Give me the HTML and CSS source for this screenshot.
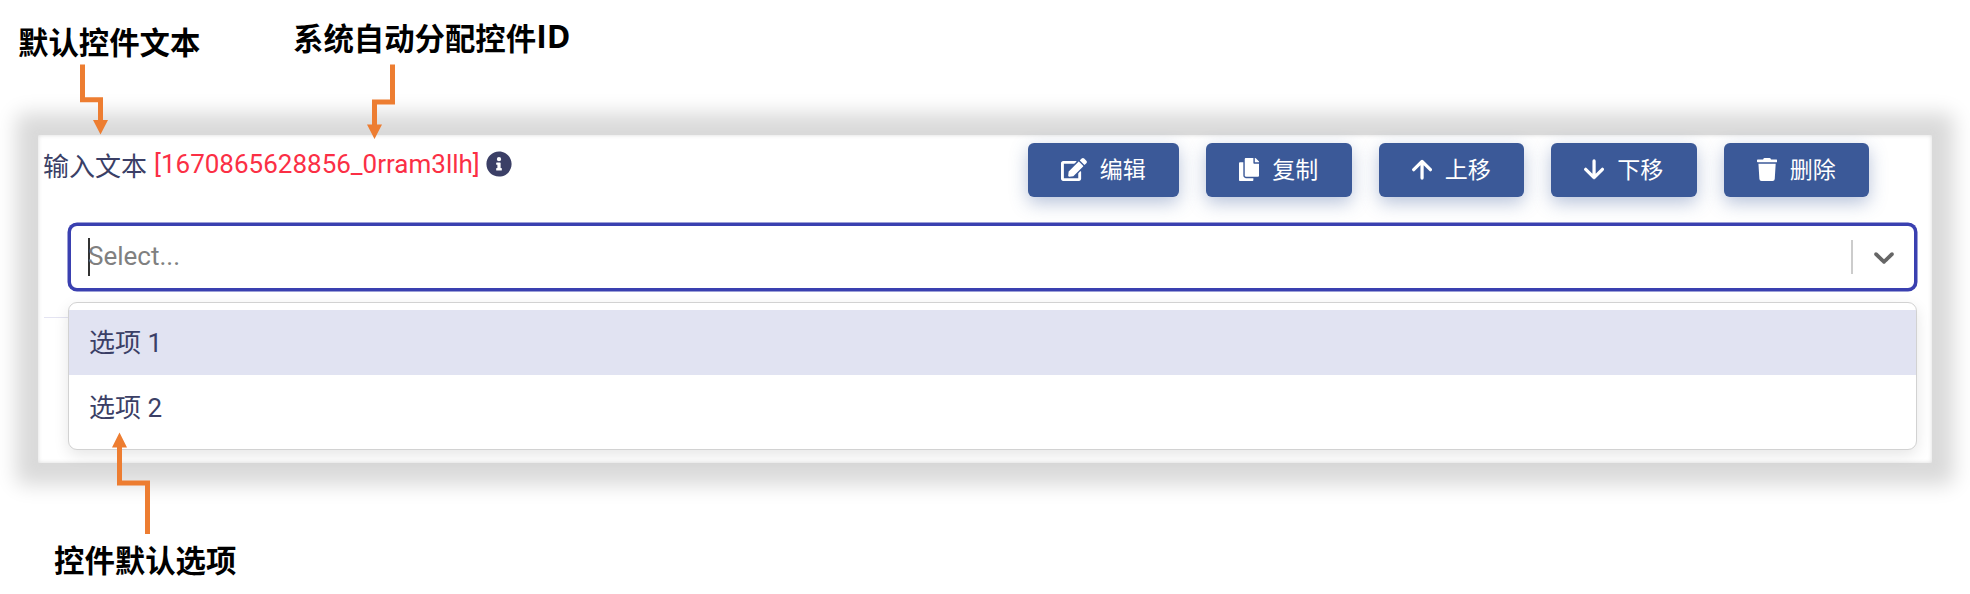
FILE: index.html
```html
<!DOCTYPE html>
<html lang="zh-CN">
<head>
<meta charset="utf-8">
<title>控件</title>
<link rel="stylesheet" href="styles.css">
</head>
<body>
<main class="panel">
  <header class="head">
    <div class="label">
      <span>输入文本</span>
      <span class="id">[1670865628856_0rram3llh]</span>
      <svg class="info" viewBox="0 0 512 512"><path fill="currentColor" d="M256 8C119 8 8 119 8 256s111 248 248 248 248-111 248-248S393 8 256 8zm0 110a42 42 0 1 1 0 84 42 42 0 0 1 0-84zm56 254c0 7-5 12-12 12h-88c-7 0-12-5-12-12v-24c0-7 5-12 12-12h12v-64h-12c-7 0-12-5-12-12v-24c0-7 5-12 12-12h64c7 0 12 5 12 12v100h12c7 0 12 5 12 12z"/></svg>
    </div>
    <div class="actions">
      <button class="btn wide"><svg viewBox="0 0 576 512"><path fill="currentColor" d="M402.600 83.200l90.200 90.200c3.800 3.800 3.800 10 0 13.800L274.400 405.600l-92.800 10.300c-12.400 1.400-22.900-9.100-21.500-21.500l10.300-92.800L388.800 83.200c3.800-3.800 10-3.800 13.800 0zm162-22.900l-48.800-48.800c-15.200-15.200-39.900-15.200-55.200 0l-35.400 35.400c-3.800 3.800-3.800 10 0 13.800l90.200 90.200c3.800 3.800 10 3.800 13.800 0l35.400-35.400c15.200-15.300 15.200-40 0-55.200zM384 346.200V448H64V128h229.800c3.200 0 6.200-1.300 8.500-3.500l40-40c7.600-7.600 2.200-20.500-8.500-20.500H48C21.500 64 0 85.500 0 112v352c0 26.500 21.500 48 48 48h352c26.500 0 48-21.500 48-48V306.200c0-10.700-12.900-16-20.500-8.500l-40 40c-2.200 2.300-3.500 5.300-3.500 8.500z"/></svg><span>编辑</span></button>
      <button class="btn"><svg viewBox="0 0 448 512"><path fill="currentColor" d="M320 448v40c0 13.300-10.700 24-24 24H24c-13.300 0-24-10.700-24-24V120c0-13.300 10.700-24 24-24h72v296c0 30.900 25.100 56 56 56h168zm0-344V0H152c-13.300 0-24 10.700-24 24v368c0 13.300 10.700 24 24 24h272c13.300 0 24-10.700 24-24V128H344c-13.200 0-24-10.800-24-24zm121-31L375 7a24 24 0 0 0-17-7h-6v96h96v-6.100c0-6.300-2.500-12.400-7-16.900z"/></svg><span>复制</span></button>
      <button class="btn"><svg viewBox="0 0 448 512"><path class="line" d="M224 446V78M38 260L224 76l186 184"/></svg><span>上移</span></button>
      <button class="btn"><svg viewBox="0 0 448 512"><path class="line" d="M224 66v368M38 252l186 184 186-184"/></svg><span>下移</span></button>
      <button class="btn"><svg viewBox="0 0 448 512"><path fill="currentColor" d="M432 32H312l-9.400-18.700A24 24 0 0 0 281.100 0H166.800a23.700 23.700 0 0 0-21.400 13.300L136 32H16A16 16 0 0 0 0 48v32a16 16 0 0 0 16 16h416a16 16 0 0 0 16-16V48a16 16 0 0 0-16-16zM32 128l21.200 339a48 48 0 0 0 47.900 45h245.800a48 48 0 0 0 47.900-45L416 128z"/></svg><span>删除</span></button>
    </div>
  </header>
  <section class="field">
    <div class="select">
      <span class="caret"></span>
      <span class="placeholder">Select...</span>
      <span class="divider"></span>
      <svg class="chevron" viewBox="0 0 20 20"><path fill="currentColor" d="M4.516 7.548c0.436-0.446 1.043-0.481 1.576 0l3.908 3.747 3.908-3.747c0.533-0.481 1.141-0.446 1.574 0 0.436 0.445 0.408 1.197 0 1.615-0.406 0.418-4.695 4.502-4.695 4.502-0.217 0.223-0.502 0.335-0.787 0.335s-0.570-0.112-0.789-0.335c0 0-4.287-4.084-4.695-4.502s-0.436-1.170 0-1.615z"/></svg>
    </div>
    <div class="menu">
      <div class="option active">选项 1</div>
      <div class="option">选项 2</div>
    </div>
    <div class="rule"></div>
  </section>
</main>
<div class="note note-text">默认控件文本</div>
<div class="note note-id">系统自动分配控件<span class="latin">ID</span></div>
<div class="note note-options">控件默认选项</div>
<svg class="arrows" viewBox="0 0 1970 594">
  <path class="stem" d="M82.500 64.500V99.700H100.500V122M392.500 64.500V102H374.500V126M147.500 534V483H119.500V446"/>
  <path class="tip" d="M93 120h15l-7.500 14.500zM367 124.500h15l-7.500 14.500zM112 447.500h15l-7.500-15z"/>
</svg>
</body>
</html>
```
FILE: styles.css
```css
* { box-sizing: border-box; }
body {
  margin: 0;
  width: 1970px;
  height: 594px;
  padding: 135px 38px 0;
  overflow: hidden;
  position: relative;
  background: #fff;
  color: #3b3f66;
  font-family: Roboto, "Noto Sans CJK SC", sans-serif;
  font-size: 26px;
}
.panel {
  height: 328px;
  padding: 8px 0 0 6px;
  border-radius: 2px;
  background: #fff;
  box-shadow: inset 0 0 4px #dadada, 0 0 4px 3px #dadada, 0 0 20px 22px #dadada;
}
.head {
  display: flex;
  justify-content: space-between;
  align-items: flex-start;
  padding-right: 63px;
}
.label {
  display: flex;
  align-items: center;
  height: 42px;
  margin-left: -1px;
  gap: 7px;
  white-space: nowrap;
}
.id { color: #fb2f45; }
.info { width: 26px; height: 26px; margin-left: -1px; }
.actions { display: flex; gap: 27px; }
.btn {
  display: flex;
  align-items: center;
  justify-content: center;
  gap: 13px;
  width: 145.500px;
  height: 54px;
  padding: 0 0 1px;
  border: 0;
  border-radius: 6px;
  background: #3b5998;
  color: #fff;
  font: 23px Roboto, "Noto Sans CJK SC", sans-serif;
  box-shadow: 0 6px 18px rgba(59, 89, 152, 0.36);
}
.btn svg { height: 23px; }
.btn span { padding-bottom: 3px; }
.wide { width: 151.500px; }
.line {
  fill: none;
  stroke: currentColor;
  stroke-width: 72;
  stroke-linecap: round;
  stroke-linejoin: round;
}
.field {
  position: relative;
  padding: 26px 15px 0 24px;
}
.select {
  display: flex;
  align-items: center;
  height: 68px;
  padding: 0 13px 0 17px;
  border: 3px solid #3a40b0;
  border-radius: 9px;
  background: #fff;
  box-shadow: 0 0 0 0.5px #3a40b0;
}
.caret { width: 2px; height: 38px; background: #333; }
.placeholder { flex: 1; margin-left: -2px; padding-bottom: 2px; color: #808080; }
.divider { width: 2px; height: 34px; background: #ccc; }
.chevron { width: 34px; height: 34px; margin-left: 14px; color: #666; }
.menu {
  position: relative;
  z-index: 1;
  height: 148px;
  margin-top: 11px;
  padding-top: 7px;
  border: 1px solid #d2d2d2;
  border-radius: 9px;
  background: #fff;
  box-shadow: 0 5px 15px rgba(0, 0, 0, 0.1);
}
.option {
  height: 66px;
  padding-left: 20px;
  line-height: 66px;
}
.active { height: 65px; background: #e1e3f2; }
.rule {
  position: absolute;
  top: 120px;
  left: 0;
  width: 24px;
  height: 1px;
  background: #e4e4f2;
}
.note {
  position: absolute;
  color: #000;
  font: bold 30.400px/40px "Noto Sans CJK SC", sans-serif;
  white-space: nowrap;
}
.note-text { left: 18px; top: 21px; }
.note-id { left: 293px; top: 17px; }
.note-options { left: 54px; top: 539px; }
.latin {
  position: relative;
  top: -2px;
  font-family: "Open Sans", sans-serif;
  font-size: 32px;
  line-height: 1;
}
.arrows {
  position: absolute;
  left: 0;
  top: 0;
  z-index: 2;
  width: 1970px;
  height: 594px;
}
.stem { fill: none; stroke: #ed7d31; stroke-width: 5; }
.tip { fill: #ed7d31; }
```
